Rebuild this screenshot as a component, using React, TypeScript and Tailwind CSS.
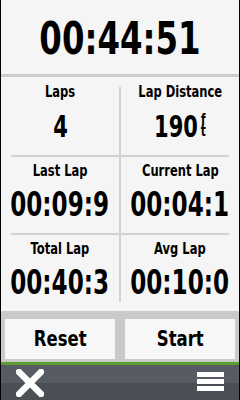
import React from 'react';

const font = "font-['DejaVu_Sans',sans-serif]";

function Cell({ label, value, unit, small }: { label: string; value: string; unit?: boolean; small?: boolean }) {
  return (
    <div className="w-[118px] flex flex-col items-center overflow-visible">
      <div className="h-[16px] leading-none text-[16px] font-bold whitespace-nowrap scale-x-[0.72]">{label}</div>
      <div className={`flex items-start justify-center whitespace-nowrap ${small ? 'mt-[12px]' : 'mt-[9px]'}`}>
        <span className={`inline-flex items-start shrink-0 leading-none font-bold scale-x-[0.7] ${small ? 'text-[30px]' : 'text-[33px]'}`}>
          {value}
          {unit && (
            <span className="ml-[4px] mt-[3px] flex flex-col items-center text-[15px] leading-[11px]">
              <span>f</span>
              <span>t</span>
            </span>
          )}
        </span>
      </div>
    </div>
  );
}

export default function App() {
  return (
    <div className={`w-[240px] h-[400px] flex flex-col bg-[#f5f5f5] border-x border-black text-black ${font}`}>
      {/* Timer */}
      <div className="h-[74px] flex items-center justify-center pt-[2px]">
        <span className="inline-block shrink-0 whitespace-nowrap text-[45px] font-bold leading-none scale-x-[0.72]">00:44:51</span>
      </div>
      <div className="h-[3px] bg-[#c9ccc9]" />

      {/* Data fields */}
      <div className="h-[234px] flex flex-col">
        <div className="h-[78px] flex">
          <div className="pt-[7px] flex">
            <Cell label="Laps" value="4" small />
          </div>
          <div className="w-[2px] mt-[10px] bg-[#d2d2d2]" />
          <div className="pt-[7px] flex">
            <Cell label="Lap Distance" value="190" unit small />
          </div>
        </div>
        <div className="flex">
          <div className="w-[10px] h-[2px]" />
          <div className="w-[108px] h-[2px] bg-[#d2d2d2]" />
          <div className="w-[2px] h-[2px] bg-[#d2d2d2]" />
          <div className="w-[108px] h-[2px] bg-[#d2d2d2]" />
        </div>
        <div className="h-[76px] flex">
          <div className="pt-[6px] flex">
            <Cell label="Last Lap" value="00:09:9" />
          </div>
          <div className="w-[2px] bg-[#d2d2d2]" />
          <div className="pt-[6px] flex">
            <Cell label="Current Lap" value="00:04:1" />
          </div>
        </div>
        <div className="flex">
          <div className="w-[10px] h-[2px]" />
          <div className="w-[108px] h-[2px] bg-[#d2d2d2]" />
          <div className="w-[2px] h-[2px] bg-[#d2d2d2]" />
          <div className="w-[108px] h-[2px] bg-[#d2d2d2]" />
        </div>
        <div className="h-[76px] flex">
          <div className="pt-[6px] flex">
            <Cell label="Total Lap" value="00:40:3" />
          </div>
          <div className="w-[2px] mb-[9px] bg-[#d2d2d2]" />
          <div className="pt-[6px] flex">
            <Cell label="Avg Lap" value="00:10:0" />
          </div>
        </div>
      </div>

      {/* Buttons */}
      <div className="h-[51px] bg-[#c8cbc8] flex gap-[10px] px-[4px] pt-[8px] pb-[3px]">
        <button className="flex-1 bg-[#f7f7f7] flex items-center justify-center">
          <span className="inline-block text-[22px] font-bold leading-none scale-x-[0.75]">Reset</span>
        </button>
        <button className="flex-1 bg-[#f7f7f7] flex items-center justify-center">
          <span className="inline-block text-[22px] font-bold leading-none scale-x-[0.75]">Start</span>
        </button>
      </div>
      <div className="h-[3px] bg-[#5d9a30]" />

      {/* Bottom bar */}
      <div className="flex-1 flex items-center justify-between pl-[15px] pr-[15px] bg-[linear-gradient(to_bottom,#575b63_0%,#575b63_50%,#4a4e55_50%,#4a4e55_100%)]">
        <svg width="28" height="28" viewBox="0 0 28 28">
          <path d="M3 3 L25 25 M25 3 L3 25" stroke="#ffffff" strokeWidth="6.5" strokeLinecap="square" />
        </svg>
        <div className="flex flex-col gap-[2px] w-[27px] mt-[-3px]">
          <div className="h-[5px] bg-white" />
          <div className="h-[5px] bg-white" />
          <div className="h-[5px] bg-white" />
        </div>
      </div>
    </div>
  );
}
